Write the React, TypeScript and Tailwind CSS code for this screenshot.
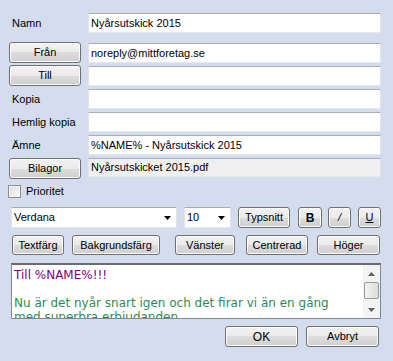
import type { ReactNode } from 'react';

const btnBase =
  'flex shrink-0 items-center justify-center rounded-[3px] border border-[#707070] bg-[linear-gradient(#f2f2f2_0%,#ebebeb_50%,#dddddd_50%,#cfcfcf_100%)] shadow-[inset_0_0_0_1px_#fcfcfc] text-black leading-none';

const field =
  'flex shrink-0 items-center border-t border-t-[#abadb3] border-x border-x-[#e2e3ea] border-b border-b-[#e3e9ef] px-[2px] leading-none';

function Btn({ children, className }: { children: ReactNode; className: string }) {
  return <button className={`${btnBase} ${className}`}>{children}</button>;
}

function Caret() {
  return (
    <svg width="7" height="4" viewBox="0 0 7 4" className="shrink-0">
      <path d="M0 0h7L3.5 4z" fill="#000" />
    </svg>
  );
}

export default function App() {
  return (
    <div className="flex h-[361px] w-[393px] flex-col overflow-hidden bg-[#d4ddee] font-['Liberation_Sans',Arial,sans-serif] text-[11px] text-black">
      {/* Namn */}
      <div className="mt-[13px] flex h-[20px] items-center">
        <span className="w-[88px] pl-[12px]">Namn</span>
        <div className={`${field} h-[20px] w-[293px] bg-white`}>Nyårsutskick 2015</div>
      </div>

      {/* Från */}
      <div className="mt-[9px] flex h-[21px] items-start">
        <Btn className="ml-[9px] h-[21px] w-[72px]">Från</Btn>
        <div className={`${field} ml-[7px] mt-[1px] h-[20px] w-[293px] bg-white`}>noreply@mittforetag.se</div>
      </div>

      {/* Till */}
      <div className="mt-[2px] flex h-[21px] items-start">
        <Btn className="ml-[9px] h-[21px] w-[72px] border-[#3c7fb1] shadow-[inset_0_0_0_1px_#b6e1f8]">Till</Btn>
        <div className={`${field} ml-[7px] mt-[1px] h-[20px] w-[293px] bg-white`} />
      </div>

      {/* Kopia */}
      <div className="mt-[3px] flex h-[20px] items-center">
        <span className="w-[88px] pl-[12px]">Kopia</span>
        <div className={`${field} h-[20px] w-[293px] bg-white`} />
      </div>

      {/* Hemlig kopia */}
      <div className="mt-[3px] flex h-[20px] items-center">
        <span className="w-[88px] pl-[12px]">Hemlig kopia</span>
        <div className={`${field} h-[20px] w-[293px] bg-white`} />
      </div>

      {/* Ämne */}
      <div className="mt-[3px] flex h-[20px] items-center">
        <span className="w-[88px] pl-[12px]">Ämne</span>
        <div className={`${field} h-[20px] w-[293px] bg-white`}>%NAME% - Nyårsutskick 2015</div>
      </div>

      {/* Bilagor */}
      <div className="mt-[3px] flex h-[21px] items-start">
        <Btn className="ml-[9px] h-[21px] w-[72px]">Bilagor</Btn>
        <div className={`${field} ml-[7px] h-[19px] w-[293px] bg-[#f0f0f0]`}>Nyårsutskicket 2015.pdf</div>
      </div>

      {/* Prioritet */}
      <div className="mt-[6px] flex h-[13px] items-center">
        <div className="ml-[8px] h-[13px] w-[13px] shrink-0 border border-[#8e8f8f] bg-[linear-gradient(135deg,#dcdcdc,#fbfbfb)] shadow-[inset_0_0_0_1px_#f4f4f4]" />
        <span className="ml-[5px]">Prioritet</span>
      </div>

      {/* Font row */}
      <div className="mt-[9px] flex h-[21px] items-center">
        <div className={`${field} ml-[11px] h-[21px] w-[166px] justify-between bg-white pr-[5px]`}>
          <span>Verdana</span>
          <Caret />
        </div>
        <div className={`${field} ml-[7px] h-[21px] w-[47px] justify-between bg-white pr-[5px]`}>
          <span>10</span>
          <Caret />
        </div>
        <Btn className="ml-[7px] h-[21px] w-[52px]">Typsnitt</Btn>
        <Btn className="ml-[8px] h-[21px] w-[24px] font-bold text-[12px]">B</Btn>
        <Btn className="ml-[6px] h-[21px] w-[23px] italic">/</Btn>
        <Btn className="ml-[7px] h-[21px] w-[23px] underline">U</Btn>
      </div>

      {/* Format row */}
      <div className="mt-[7px] flex h-[20px] items-center">
        <Btn className="ml-[12px] h-[20px] w-[52px]">Textfärg</Btn>
        <Btn className="ml-[8px] h-[20px] w-[88px]">Bakgrundsfärg</Btn>
        <Btn className="ml-[15px] h-[20px] w-[60px]">Vänster</Btn>
        <Btn className="ml-[11px] h-[20px] w-[62px]">Centrerad</Btn>
        <Btn className="ml-[9px] h-[20px] w-[63px]">Höger</Btn>
      </div>

      {/* Rich text */}
      <div className="ml-[11px] mt-[8px] flex h-[56px] w-[370px] overflow-hidden border border-[#828790] border-t-2 border-t-[#6b6b6b] bg-white">
        <div className="flex-1 overflow-hidden pl-[2px] pt-[3px] font-['DejaVu_Sans',Verdana,sans-serif] text-[12px] leading-[14px]">
          <div className="text-[#800080]">Till %NAME%!!!</div>
          <div className="h-[14px]" />
          <div className="whitespace-nowrap text-[#2e8b57]">Nu är det nyår snart igen och det firar vi än en gång</div>
          <div className="whitespace-nowrap text-[#2e8b57]">med superbra erbjudanden</div>
        </div>
        <div className="flex w-[17px] shrink-0 flex-col items-center bg-[#f3f3f3]">
          <div className="flex h-[17px] w-full items-center justify-center">
            <svg width="7" height="4" viewBox="0 0 7 4">
              <path d="M3.5 0L7 4H0z" fill="#606060" />
            </svg>
          </div>
          <div className="h-[17px] w-[15px] rounded-[2px] border border-[#9a9a9a] bg-[linear-gradient(90deg,#f4f4f4,#dcdcdc)]" />
          <div className="flex-1" />
          <div className="flex h-[17px] w-full items-center justify-center">
            <svg width="7" height="4" viewBox="0 0 7 4">
              <path d="M0 0h7L3.5 4z" fill="#606060" />
            </svg>
          </div>
        </div>
      </div>

      {/* OK / Avbryt */}
      <div className="mt-[7px] flex h-[21px] items-center justify-end pr-[14px]">
        <Btn className="h-[21px] w-[73px] text-[12px]">OK</Btn>
        <Btn className="ml-[8px] h-[21px] w-[73px]">Avbryt</Btn>
      </div>
    </div>
  );
}
